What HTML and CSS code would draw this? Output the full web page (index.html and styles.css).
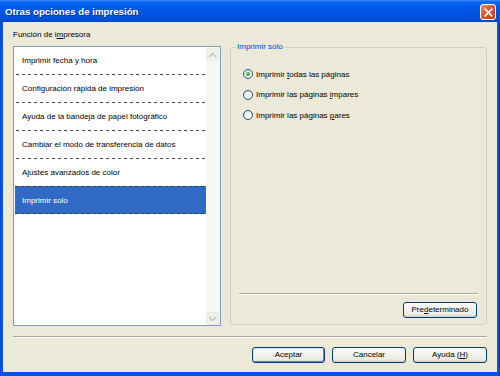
FILE: index.html
```html
<!DOCTYPE html>
<html lang="es">
<head>
<meta charset="utf-8">
<title>Otras opciones de impresión</title>
<link rel="stylesheet" href="styles.css">
</head>
<body>
<div class="window">
  <div class="titlebar">
    <span class="title">Otras opciones de impresión</span>
    <span class="close">
      <svg width="9" height="9" viewBox="0 0 9 9"><path d="M1.2 1.2 L7.8 7.8 M7.8 1.2 L1.2 7.8" stroke="#fff" stroke-width="1.7" stroke-linecap="square"/></svg>
    </span>
  </div>
  <div class="client">
    <div class="main">
      <div class="left">
        <div class="label">Función de i<u>m</u>presora</div>
        <div class="list">
          <div class="items">
            <div class="item">Imprimir fecha y hora</div>
            <div class="item">Configuración rápida de impresión</div>
            <div class="item">Ayuda de la bandeja de papel fotográfico</div>
            <div class="item">Cambiar el modo de transferencia de datos</div>
            <div class="item">Ajustes avanzados de color</div>
            <div class="item sel">Imprimir solo</div>
          </div>
          <div class="scroll">
            <div class="sbtn"><svg width="9" height="6" viewBox="0 0 9 6"><path d="M1 5 L4.5 1.5 L8 5" fill="none" stroke="#C8C6B8" stroke-width="1.6"/></svg></div>
            <div class="sbtn"><svg width="9" height="6" viewBox="0 0 9 6"><path d="M1 1 L4.5 4.5 L8 1" fill="none" stroke="#C8C6B8" stroke-width="1.6"/></svg></div>
          </div>
        </div>
      </div>
      <div class="group">
        <span class="legend">Imprimir solo</span>
        <div class="radios">
          <div class="radio-row"><span class="radio checked"><span class="dot"></span></span><span>Imprimir <u>t</u>odas las páginas</span></div>
          <div class="radio-row"><span class="radio"></span><span>Imprimir las páginas <u>i</u>mpares</span></div>
          <div class="radio-row"><span class="radio"></span><span>Imprimir las páginas <u>p</u>ares</span></div>
        </div>
        <div class="sep"></div>
        <div class="btn-row"><span class="btn wide">Pre<u>d</u>eterminado</span></div>
      </div>
    </div>
    <div class="sep foot-sep"></div>
    <div class="footer">
      <span class="btn default">Aceptar</span>
      <span class="btn">Cancelar</span>
      <span class="btn">Ayuda (<u>H</u>)</span>
    </div>
  </div>
</div>
</body>
</html>
```

FILE: styles.css
```css
* { box-sizing: border-box; }
html, body { margin: 0; padding: 0; }
body {
  width: 500px;
  height: 376px;
  overflow: hidden;
  font-family: "Liberation Sans", Arial, sans-serif;
  font-size: 8px;
  color: #000;
  background: #fff;
}
u { text-decoration: underline; text-underline-offset: 1px; }

.window {
  width: 500px;
  height: 376px;
  display: flex;
  flex-direction: column;
  background: linear-gradient(to right, #0831D9 0, #0A5BE8 1px, #0055E5 2px, #0055E5 calc(100% - 2px), #0831D9 100%);
}

.titlebar {
  height: 22px;
  flex: none;
  display: flex;
  align-items: center;
  justify-content: space-between;
  padding: 1px 4px 0 5px;
  background: linear-gradient(to bottom, #3D8BF7 0, #0A66F2 2px, #0060EE 4px, #0058E6 9px, #0054E2 15px, #0050DA 19px, #0048C8 21px, #0045BF 22px);
}
.title {
  color: #fff;
  font-weight: bold;
  font-size: 9.7px;
  text-shadow: 1px 1px 0 #0A2E9E;
}
.close {
  width: 16px;
  height: 16px;
  margin-top: 1px;
  border: 1px solid #fff;
  border-radius: 3px;
  background: linear-gradient(135deg, #F08C6C 0, #E0542E 45%, #C73A1A 100%);
  display: flex;
  align-items: center;
  justify-content: center;
}
.close svg { display: block; }

.client {
  flex: 1;
  margin: 0 3px 4px 3px;
  background: #ECE9D8;
  padding: 7px 10px 0 10px;
  display: flex;
  flex-direction: column;
}

.main {
  display: flex;
  gap: 9px;
}
.left {
  width: 208px;
  display: flex;
  flex-direction: column;
}
.label {
  height: 12px;
  line-height: 12px;
  margin-bottom: 5px;
}
.list {
  height: 280px;
  border: 1px solid #7F9DB9;
  background: #fff;
  display: flex;
}
.items {
  flex: 1;
  padding-left: 1px;
  display: flex;
  flex-direction: column;
}
.item {
  height: 28px;
  flex: none;
  display: flex;
  align-items: center;
  padding-left: 7px;
  padding-bottom: 1px;
  background-image: repeating-linear-gradient(to right, #4A4A4A 0 3px, transparent 3px 6px);
  background-size: calc(100% - 2px) 1px;
  background-position: 1px 100%;
  background-repeat: no-repeat;
}
.item.sel {
  margin-top: -1px;
  padding-top: 1px;
  color: #fff;
  background-color: #316AC5;
  background-image:
    repeating-linear-gradient(to right, #3A3A3A 0 3px, transparent 3px 6px),
    repeating-linear-gradient(to right, #3A3A3A 0 3px, transparent 3px 6px);
  background-size: 100% 1px, 100% 1px;
  background-position: 0 0, 0 100%;
  background-repeat: no-repeat, no-repeat;
}
.scroll {
  width: 14px;
  flex: none;
  background: #F8F7F3;
  display: flex;
  flex-direction: column;
  justify-content: space-between;
  padding: 1px 1px 0 0;
}
.sbtn {
  height: 13px;
  border-radius: 2px;
  background: #F1F0EA;
  border: 1px solid #ECEBE3;
  display: flex;
  align-items: center;
  justify-content: center;
}
.sbtn svg { display: block; }

.group {
  width: 257px;
  height: 278px;
  margin-top: 18px;
  border: 1px solid #D0D0BF;
  border-radius: 3px;
  position: relative;
  display: flex;
  flex-direction: column;
  padding: 16px 8px 6px 8px;
}
.legend {
  position: absolute;
  top: -7px;
  left: 5px;
  padding: 0 1px;
  line-height: 12px;
  background: #ECE9D8;
  color: #0046D5;
}
.radios {
  display: flex;
  flex-direction: column;
  padding-left: 4px;
}
.radio-row {
  height: 20.5px;
  display: flex;
  align-items: center;
  gap: 3px;
}
.radio {
  width: 10px;
  height: 10px;
  flex: none;
  border-radius: 50%;
  border: 1px solid #1C5180;
  background: radial-gradient(circle at 65% 65%, #FFFFFF 0, #F4F3EE 45%, #D8D5C8 100%);
  display: flex;
  align-items: center;
  justify-content: center;
}
.dot {
  width: 4px;
  height: 4px;
  border-radius: 50%;
  background: radial-gradient(circle at 40% 40%, #6BD16B 0, #21A121 70%);
}

.sep {
  margin-top: auto;
  height: 2px;
  flex: none;
  border-top: 1px solid #ACA899;
  border-bottom: 1px solid #FFFFFF;
}
.btn-row {
  display: flex;
  justify-content: flex-end;
  margin-top: 7px;
}
.btn {
  height: 16px;
  width: 74px;
  border: 1px solid #003C74;
  border-radius: 3px;
  background: linear-gradient(to bottom, #FFFFFF 0, #F6F5F1 30%, #ECEBE6 80%, #D6D0C5 100%);
  display: flex;
  align-items: center;
  justify-content: center;
  line-height: 12px;
}
.btn.wide { margin-right: 1px; }
.btn.default {
  width: 73px;
  box-shadow: inset 1px 1px 0 #CEE7FF, inset -1px -1px 0 #6982EE;
}

.foot-sep {
  margin-top: 10px;
}
.footer {
  display: flex;
  justify-content: flex-end;
  gap: 7px;
  margin-top: 9px;
}
```
